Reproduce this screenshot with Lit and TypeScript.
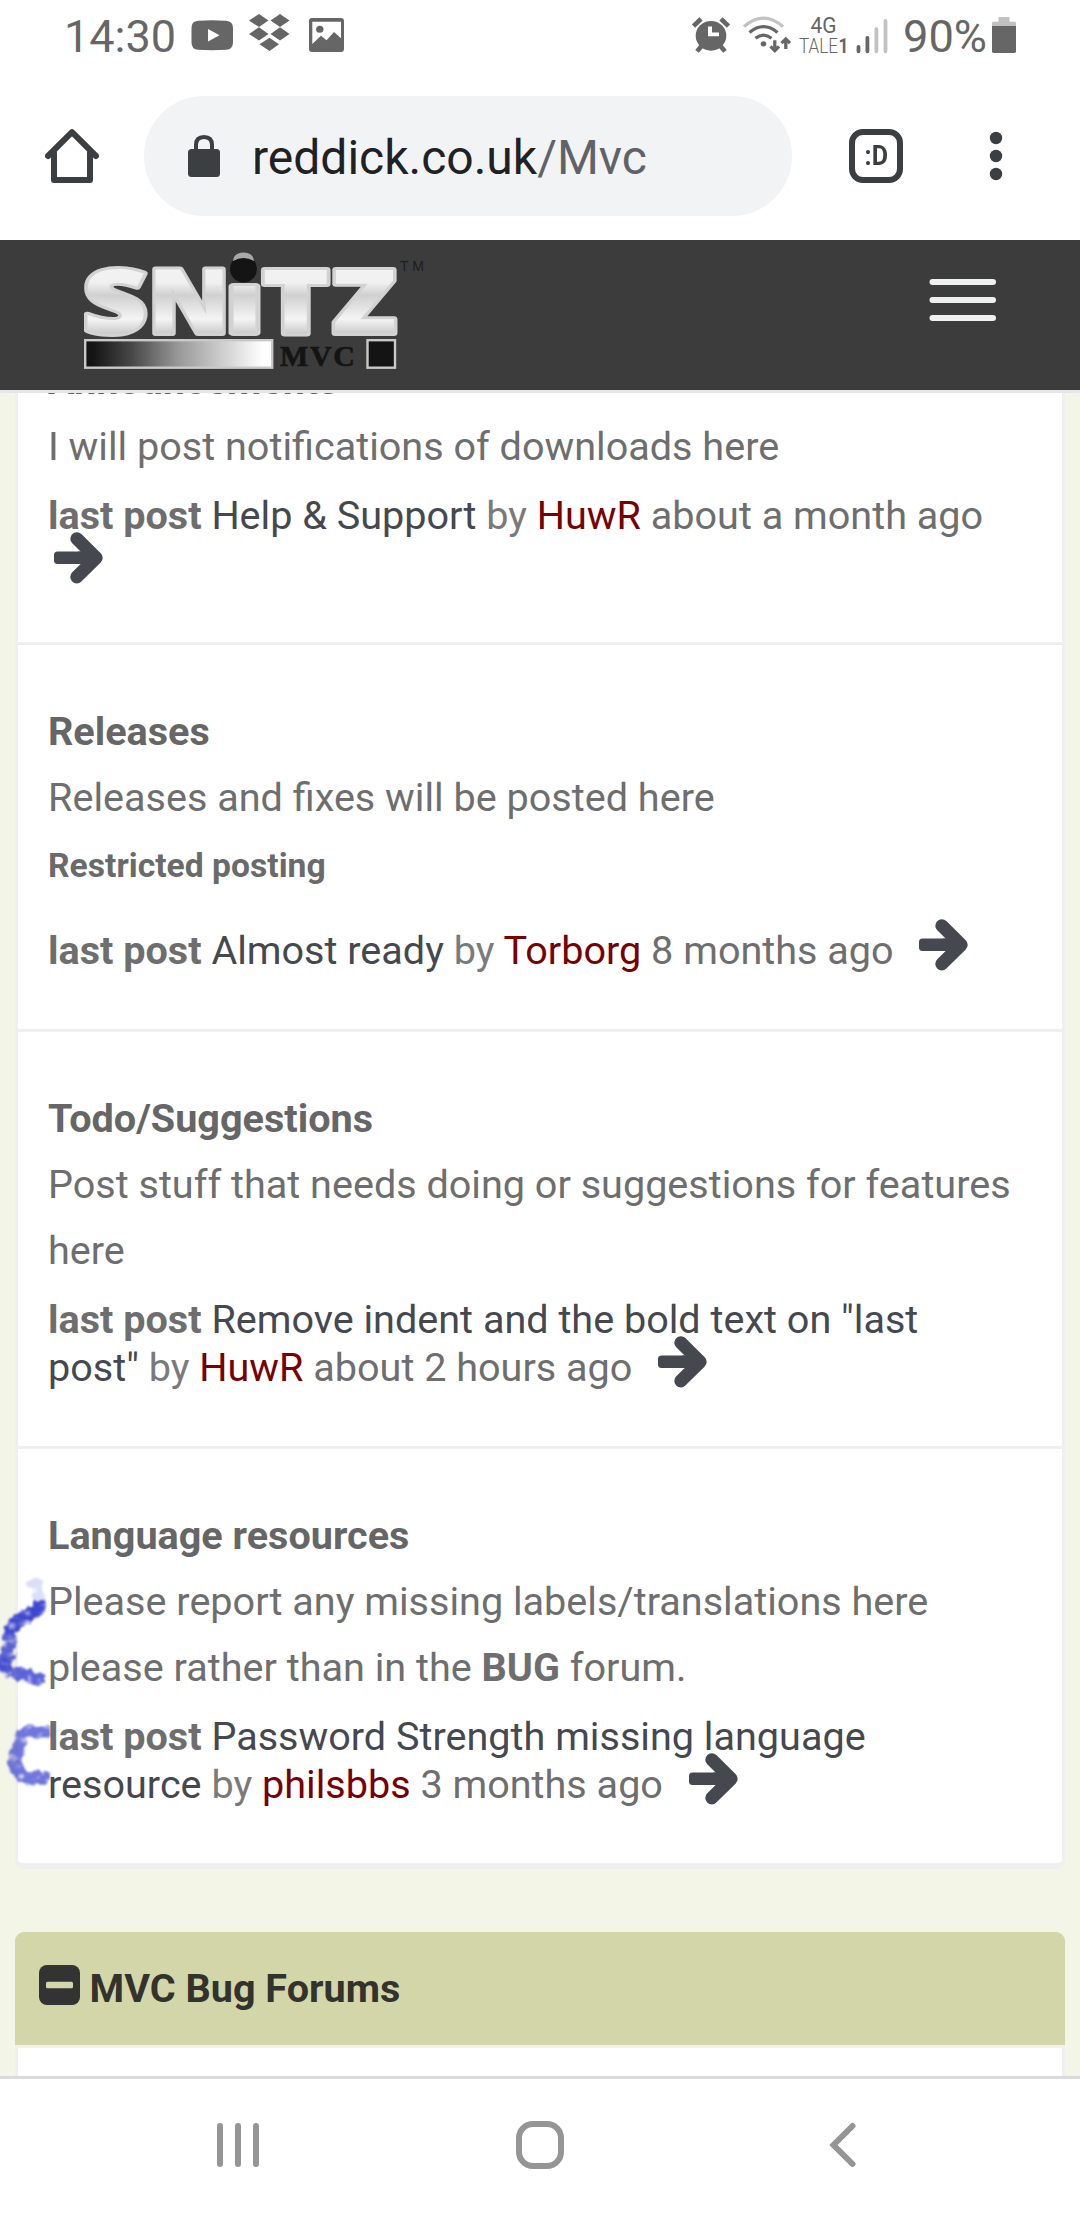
import { LitElement, html, svg, css } from "lit";
import { customElement, property } from "lit/decorators.js";

interface Forum {
  title: string;
  desc: unknown;
  note?: string;
  topic: string;
  user: string;
  when: string;
}

const forums: Forum[] = [
  { title: "Announcements", desc: "I will post notifications of downloads here", topic: "Help & Support", user: "HuwR", when: "about a month ago" },
  { title: "Releases", desc: "Releases and fixes will be posted here", note: "Restricted posting", topic: "Almost ready", user: "Torborg", when: "8 months ago" },
  { title: "Todo/Suggestions", desc: "Post stuff that needs doing or suggestions for features here", topic: 'Remove indent and the bold text on "last post"', user: "HuwR", when: "about 2 hours ago" },
  { title: "Language resources", desc: html`Please report any missing labels/translations here please rather than in the <b>BUG</b> forum.`, topic: "Password Strength missing language resource", user: "philsbbs", when: "3 months ago" },
];

@customElement("status-bar")
class StatusBar extends LitElement {
  static styles = css`
    :host { display: block; height: 72px; background: #fff; }
    svg { display: block; }
    text { font-family: Roboto, sans-serif; fill: #666; }
  `;
  render() {
    return html`<svg width="1080" height="72" viewBox="0 0 1080 72" fill="#666"><g transform="scale(1 0.968)">
      <text x="64" y="53.500" font-size="46" textLength="112" lengthAdjust="spacingAndGlyphs">14:30</text>
      <path fill-rule="evenodd" d="M198 21.500Q212 20.500 226 21.500Q233 22 233 29V44Q233 51 226 51.500Q212 52.500 198 51.500Q191.500 51 191.500 44V29Q191.500 22 198 21.500ZM208 30V43L219.500 36.500Z"/>
      <path d="M259 14.500L268.500 21.300L259 28L249 21.300ZM280 14.500L289.500 21.300L280 28L270.500 21.300ZM259 28.200L268.500 35L259 41.800L249 35ZM280 28.200L289.500 35L280 41.800L270.500 35ZM269.500 39L279 45.800L269.500 52.600L259.500 45.800Z"/>
      <path fill-rule="evenodd" d="M312 18.700H341Q344 18.700 344 21.700V50.600Q344 53.600 341 53.600H312Q309 53.600 309 50.600V21.700Q309 18.700 312 18.700ZM312.300 22.500V45.500L321 37L326.500 41.500L334 33L341 39.500V22.500Z"/>
      <circle cx="319.800" cy="30.200" r="3.700"/>
      <circle cx="711" cy="37" r="15.300"/>
      <path d="M693.500 27L701 19.500M728.500 27L721 19.500M697 53L702 47M725 53L720 47" stroke="#666" stroke-width="4.600"/>
      <path d="M710 27.500V34.500V35.500H719" stroke="#fff" stroke-width="4" fill="none"/>
      <g fill="none" stroke="#666" stroke-width="3.300">
        <path stroke="#c2c2c2" d="M744 27.500Q763.500 10 783 27.500"/>
        <path d="M749.500 33.500Q763.500 21.500 777.500 33.500"/>
        <path d="M755.500 39.500Q763.500 33 771.500 39.500"/>
        <path d="M774.800 41.500V52M770.500 48L774.800 52.300L779 48M785.800 50.500V40M781.500 44.500L785.800 40.200L790 44.500"/>
      </g>
      <circle cx="763.500" cy="45.300" r="2.800"/>
      <text x="810.500" y="34.500" font-size="23" textLength="26" lengthAdjust="spacingAndGlyphs">4G</text>
      <text x="799" y="55" font-size="20.500" font-weight="300" textLength="39" lengthAdjust="spacingAndGlyphs">TALE</text>
      <text x="838.500" y="55" font-size="20.500" font-weight="700" textLength="10" lengthAdjust="spacingAndGlyphs">1</text>
      <g stroke-width="3.800" stroke-linecap="round">
        <path stroke="#666" d="M858.500 48.500V53M867.400 39V53"/>
        <path stroke="#c2c2c2" d="M876.400 30V53M885.500 21.500V53"/>
      </g>
      <text x="903" y="53.500" font-size="46" textLength="84" lengthAdjust="spacingAndGlyphs">90%</text>
      <path fill="#c2c2c2" d="M998.500 17.500H1009.500V22.500H1014.500Q1016 22.500 1016 24V27H992V24Q992 22.500 993.500 22.500H998.500Z"/>
      <path d="M992 26.800H1016V53Q1016 54.800 1014.500 54.800H993.500Q992 54.800 992 53Z"/>
    </g></svg>`;
  }
}

@customElement("browser-bar")
class BrowserBar extends LitElement {
  static styles = css`
    :host { display: flex; align-items: center; height: 168px; box-sizing: border-box; padding: 0 0 0 45px; background: #fff; font-family: Roboto, sans-serif; }
    svg { display: block; flex: none; }
    .pill { display: flex; align-items: center; box-sizing: border-box; width: 648px; height: 120px; margin-left: 45px; padding-left: 44px; border-radius: 60px; background: #f1f3f5; }
    .url { margin-left: 32px; padding-top: 3px; font-size: 48px; line-height: 60px; color: #5f6267; white-space: pre; }
    .host { color: #1f2124; }
    .tab { margin-left: 57px; box-sizing: border-box; width: 54px; height: 54px; border: 6px solid #3c3f42; border-radius: 14px; display: flex; align-items: center; justify-content: center; color: #3c3f42; font: bold 28.500px/40px Roboto, sans-serif; }
    .face { display: block; transform: scaleX(0.88); }
    .dots { margin-left: 86px; }
  `;
  render() {
    return html`
      <svg width="54" height="54" viewBox="0 0 54 54" fill="none" stroke="#3c3f42" stroke-width="6" stroke-linecap="round" stroke-linejoin="round"><path d="M3 27L27 3.200L51 27" /><path d="M9 24V51H45V24" /></svg>
      <div class="pill">
        <svg width="32" height="42" viewBox="0 0 32 42"><rect y="14" width="32" height="28" rx="3.500" fill="#3c3f42"/><path d="M8 16V10Q8 2 16 2Q24 2 24 10V16" fill="none" stroke="#3c3f42" stroke-width="4"/></svg>
        <div class="url"><span class="host">reddick.co.uk</span>/Mvc</div>
      </div>
      <div class="tab"><span class="face">:D</span></div>
      <svg class="dots" width="14" height="50" viewBox="0 0 14 50" fill="#3c3f42"><circle cx="7" cy="7" r="6.200"/><circle cx="7" cy="25" r="6.200"/><circle cx="7" cy="43" r="6.200"/></svg>
    `;
  }
}

// glyph, left edge, advance width, font size
const letters: [string, number, number, number][] = [["S", -1.5, 65, 88], ["N", 64, 82, 88], ["I", 141, 39, 66], ["T", 178, 67.5, 88], ["Z", 248, 64.5, 88]];

@customElement("site-header")
class SiteHeader extends LitElement {
  static styles = css`
    :host { display: flex; flex: none; justify-content: space-between; box-sizing: border-box; height: 153px; padding: 10px 84px 0 84px; background: #3c3c3c; border-bottom: 3px solid #e6e6e8; }
    svg { display: block; }
    .letter { font-family: "Open Sans", sans-serif; font-weight: 800; fill: url(#metal); stroke: #d2d2d2; stroke-width: 6; stroke-linejoin: round; paint-order: stroke; }
    .mvc { font: bold 30px "Liberation Serif", serif; fill: #141414; stroke: #141414; stroke-width: 0.6; }
    .tm { font: 14px "Liberation Sans", sans-serif; fill: #1c1c1c; }
    .menu { margin-top: 29px; }
  `;
  render() {
    return html`
      <svg width="345" height="130" viewBox="0 0 345 130">
        <defs>
          <linearGradient id="metal" gradientUnits="userSpaceOnUse" x1="0" y1="18" x2="0" y2="86"><stop offset="0" stop-color="#f2f2f2"/><stop offset="0.220" stop-color="#f0f0f0"/><stop offset="0.400" stop-color="#d0d0d0"/><stop offset="0.750" stop-color="#f4f4f4"/><stop offset="1" stop-color="#c4c4c4"/></linearGradient>
          <linearGradient id="fade"><stop offset="0.040" stop-color="#141414"/><stop offset="0.250" stop-color="#484848"/><stop offset="0.500" stop-color="#999"/><stop offset="0.950" stop-color="#fff"/></linearGradient>
        </defs>
        ${letters.map(([c, x, w, size]) => svg`<text class="letter" font-size=${size} x=${x} y="83" textLength=${w} lengthAdjust="spacingAndGlyphs">${c}</text>`)}
        <circle cx="159.500" cy="19" r="13.500" fill="#141414"/>
        <path d="M149 11Q150 2.500 159.500 2.500Q169 2.500 170 11Q159.500 5 149 11Z" fill="#a8a8a8"/>
        <rect x="1.200" y="90.200" width="187" height="27.500" fill="url(#fade)" stroke="#c9c9c9" stroke-width="2.400"/>
        <text class="mvc" x="196" y="116" textLength="75">MVC</text>
        <rect x="283.500" y="90.200" width="27.500" height="27.500" fill="#141414" stroke="#c9c9c9" stroke-width="2.400"/>
        <text class="tm" x="316" y="21" textLength="24">TM</text>
      </svg>
      <svg class="menu" width="67" height="42" viewBox="0 0 67 42" fill="#eef0f0"><rect x="0.500" width="66.500" height="6" rx="3"/><rect x="0.500" y="18" width="66.500" height="6" rx="3"/><rect x="0.500" y="36" width="66.500" height="6" rx="3"/></svg>
    `;
  }
}

@customElement("forum-row")
class ForumRow extends LitElement {
  @property({ attribute: false }) forum!: Forum;
  static styles = css`
    :host { display: block; padding: 53.5px 30px 54.5px; background: #fff; font: 39.6px/66px Roboto, sans-serif; color: #6e6e6e; }
    .title { font-weight: 700; color: #666; }
    .note { font-size: 33.66px; font-weight: 700; color: #6a6a6a; padding: 2px 0 16px; }
    .last { line-height: 48px; padding: 12px 30px 0 0; }
    .topic { color: #45484f; }
    .by { color: #7a7a7a; }
    .user { color: #780000; }
    .arrow { display: inline-block; width: 49px; height: 52px; margin: -14px 0 -2px 6px; vertical-align: -5px; }
  `;
  render() {
    const f = this.forum;
    return html`
      <div class="title">${f.title}</div>
      <div class="desc">${f.desc}</div>
      ${f.note ? html`<div class="note">${f.note}</div>` : ""}
      <div class="last"><b>last post</b> <span class="topic">${f.topic}</span> <span class="by">by</span> <span class="user">${f.user}</span> ${f.when}&nbsp; <svg class="arrow" viewBox="0 0 49 52"><rect y="19.500" width="36" height="12.600" rx="3.500" fill="#45484f"/><path d="M24 19.500H36V32H24Z" fill="#45484f"/><path d="M22.800 6.700L42.200 25.800L22.800 44.900" fill="none" stroke="#45484f" stroke-width="13" stroke-linecap="round" stroke-linejoin="round"/></svg></div>
    `;
  }
}

@customElement("nav-bar")
class NavBar extends LitElement {
  static styles = css`
    :host { display: flex; flex: none; align-items: center; box-sizing: border-box; height: 144px; padding: 0 0 9px 217px; background: #fff; border-top: 3px solid #d9dadc; }
    svg { display: block; flex: none; }
    .home { margin: 0 264px 0 257px; }
  `;
  render() {
    return html`
      <svg width="42" height="46" fill="none" stroke="#959595" stroke-width="6" stroke-linecap="round"><path d="M3 4V42M21 4V42M39 4V42"/></svg>
      <svg class="home" width="48" height="48" fill="none" stroke="#959595" stroke-width="6"><rect x="3" y="3" width="42" height="42" rx="14"/></svg>
      <svg width="28" height="46" fill="none" stroke="#959595" stroke-width="6" stroke-linecap="round"><path d="M24.500 4L5.500 23L24.500 42"/></svg>
    `;
  }
}

@customElement("app-root")
class AppRoot extends LitElement {
  static styles = css`
    :host { display: flex; flex-direction: column; position: relative; width: 1080px; height: 2220px; overflow: hidden; background: #fff; }
    status-bar, browser-bar { flex: none; }
    .page { flex: 1; min-height: 0; overflow: hidden; display: flex; flex-direction: column; justify-content: flex-end; padding: 0 15px; background: #f3f5e6; }
    .panel { flex: none; border: 3px solid #efefef; border-top: none; border-bottom-width: 6px; border-radius: 0 0 9px 9px; overflow: hidden; margin-bottom: 63px; }
    forum-row { border-bottom: 3px solid #efefef; }
    forum-row:last-child { border-bottom: none; }
    .category { display: flex; flex: none; align-items: center; box-sizing: border-box; height: 113px; padding-left: 24px; gap: 9.5px; border-radius: 9px 9px 0 0; background: #d2d6a9; color: #33332e; font: bold 39.6px/60px Roboto, sans-serif; }
    .next { flex: none; box-sizing: border-box; height: 31px; background: #fff; border: 3px solid #efefef; border-top-color: #f1f1e6; border-bottom: none; }
    .minus { display: block; margin-top: -7px; }
    .ink { position: absolute; left: 0; top: 1570px; width: 60px; height: 240px; }
  `;
  render() {
    return html`
      <status-bar></status-bar>
      <browser-bar></browser-bar>
      <site-header></site-header>
      <main class="page">
        <div class="panel">${forums.map((f) => html`<forum-row .forum=${f}></forum-row>`)}</div>
        <div class="category"><svg class="minus" width="41" height="40"><rect width="41" height="40" rx="8" fill="#333"/><rect x="7" y="16.700" width="27" height="6.600" rx="1.500" fill="#d2d6a9"/></svg><span>MVC Bug Forums</span></div>
        <div class="next"></div>
      </main>
      <nav-bar></nav-bar>
      <svg class="ink" viewBox="0 0 60 240">
        <defs>
          <filter id="rough" filterUnits="userSpaceOnUse" x="-20" y="-10" width="100" height="260" color-interpolation-filters="sRGB">
            <feTurbulence type="fractalNoise" baseFrequency="0.120" numOctaves="3" seed="4" result="noise"/>
            <feDisplacementMap in="SourceGraphic" in2="noise" scale="9" xChannelSelector="R" yChannelSelector="G" result="edge"/>
            <feColorMatrix in="noise" type="matrix" values="0 0 0 0 0  0 0 0 0 0  0 0 0 0 0  0 0 2.400 0 -0.150" result="grain"/>
            <feComposite in="edge" in2="grain" operator="in"/>
            <feGaussianBlur stdDeviation="1.100"/>
          </filter>
        </defs>
        <g filter="url(#rough)" fill="none" stroke="#3f48d0" stroke-linecap="round" stroke-linejoin="round">
          <path d="M33 14L38 15L36 22L40 28" stroke-width="10" opacity="0.180"/>
          <path d="M39 36L31 44L19 52L12 57" stroke-width="13"/>
          <path d="M9 66L9 78L8 86L4 94" stroke-width="14" opacity="0.850"/>
          <path d="M4 96L13 103L26 105L39 108" stroke-width="13" opacity="0.850"/>
          <path d="M45 162L28 161L22 166L18 181L13 190L18 202L28 208L44 208" stroke-width="13" opacity="0.750"/>
        </g>
      </svg>
    `;
  }
}
